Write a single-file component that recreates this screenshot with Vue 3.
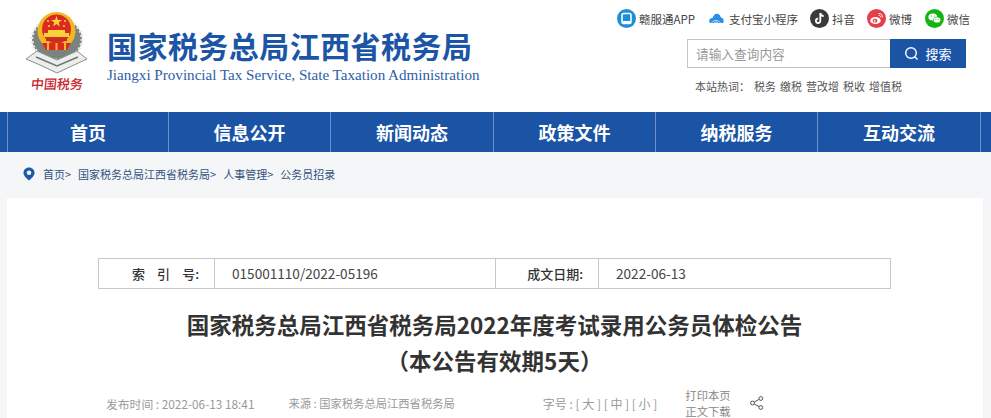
<template>
  <div class="page">
    <header class="top">
      <div class="brand">
        <div class="emblem">
          <svg width="62" height="62" viewBox="0 0 62 62">
            <ellipse cx="31" cy="27" rx="25" ry="21" fill="#7c827e" />
            <ellipse cx="31" cy="27" rx="25" ry="21" fill="none" stroke="#e8eae8" stroke-width="3" stroke-dasharray="2 2.500" />
            <path d="M0 47 L11 39 L31 48 L51 39 L61 47 L48 53 L31 61 L14 53 Z" fill="#eceeec" stroke="#8a908c" stroke-width="1" />
            <path d="M10 45 L31 54 L52 45" fill="none" stroke="#6f7672" stroke-width="1.500" />
            <circle cx="30.500" cy="19" r="19" fill="#f2b824" />
            <circle cx="30.500" cy="17" r="14.500" fill="#dc2a20" />
            <path d="M30.500 4 L31.900 8 L36 8 L32.700 10.500 L33.900 14.500 L30.500 12 L27.100 14.500 L28.300 10.500 L25 8 L29.100 8 Z" fill="#f7d33a" />
            <circle cx="22" cy="9" r="1.100" fill="#f7d33a" /><circle cx="39" cy="9" r="1.100" fill="#f7d33a" />
            <circle cx="23" cy="14" r="1.100" fill="#f7d33a" /><circle cx="38" cy="14" r="1.100" fill="#f7d33a" />
            <path d="M22 18 L39 18 L39 21 L43 21 L43 25 L18 25 L18 21 L22 21 Z" fill="#f7d33a" />
            <path d="M20 27 H41 V29 H20 Z" fill="#b8322a" />
            <path d="M16 31 H45 L41 38 H20 Z" fill="#dc2a20" />
            <path d="M22 31 V38 M30.500 31 V38 M39 31 V38" stroke="#f2b824" stroke-width="2" />
          </svg>
          <span class="emblem-name">中国税务</span>
        </div>
        <div class="brand-text">
          <div class="brand-cn">国家税务总局江西省税务局</div>
          <div class="brand-en">Jiangxi Provincial Tax Service, State Taxation Administration</div>
        </div>
      </div>
      <div class="tools">
        <div class="socials">
          <a class="social">
            <svg width="19" height="19" viewBox="0 0 19 19">
              <circle cx="9.500" cy="9.500" r="9.500" fill="#1c8fd8" />
              <rect x="5" y="4.500" width="9" height="10" rx="1.500" fill="none" stroke="#fff" stroke-width="1.600" />
              <rect x="6" y="12" width="7" height="2.400" fill="#fff" />
            </svg>
            赣服通APP
          </a>
          <a class="social alipay">
            <svg width="15" height="11" viewBox="0 0 17 12">
              <path d="M1 11 C-1 8 1 5.500 4 5.500 C5 2 7 0.500 9 0.500 C11.500 0.500 13 2.500 13.500 5 C16 5.500 17.500 8 16 11 Z" fill="#2a8de8" />
              <path d="M3 11 C4.500 7.500 10.500 7 13 11 M5.500 11 C7 9.500 9 9.500 10.500 11" fill="none" stroke="#cfe6fb" stroke-width="1" />
            </svg>
            支付宝小程序
          </a>
          <a class="social">
            <svg width="19" height="19" viewBox="0 0 19 19">
              <circle cx="9.500" cy="9.500" r="9.500" fill="#3a3a3c" />
              <path d="M10.300 4 V11.800 A2.200 2.200 0 1 1 8.100 9.600 M10.300 4 C10.600 5.800 11.800 6.900 13.700 7.100" fill="none" stroke="#fff" stroke-width="1.800" />
            </svg>
            抖音
          </a>
          <a class="social">
            <svg width="19" height="19" viewBox="0 0 19 19">
              <circle cx="9.500" cy="9.500" r="9.500" fill="#e5404a" />
              <ellipse cx="8.500" cy="11.500" rx="5.200" ry="3.600" fill="#fff" />
              <ellipse cx="8" cy="11.700" rx="2.400" ry="1.900" fill="#e5404a" />
              <circle cx="7.600" cy="11.800" r="0.900" fill="#fff" />
              <path d="M11.500 4.500 C14 4.200 15.800 6 15.200 8.600 M11.800 6.500 C13 6.300 13.700 7.100 13.400 8.200" fill="none" stroke="#fff" stroke-width="1" />
            </svg>
            微博
          </a>
          <a class="social wechat">
            <svg width="19" height="19" viewBox="0 0 19 19">
              <circle cx="9.500" cy="9.500" r="9.500" fill="#14b414" />
              <ellipse cx="7.800" cy="8" rx="4.400" ry="3.600" fill="#fff" />
              <ellipse cx="12" cy="11" rx="3.700" ry="3" fill="#fff" stroke="#14b414" stroke-width="0.600" />
              <circle cx="6.300" cy="7" r="0.600" fill="#14b414" /><circle cx="9.200" cy="7" r="0.600" fill="#14b414" />
              <circle cx="10.800" cy="10.500" r="0.500" fill="#14b414" /><circle cx="13.200" cy="10.500" r="0.500" fill="#14b414" />
            </svg>
            微信
          </a>
        </div>
        <div class="search">
          <div class="search-input">请输入查询内容</div>
          <button class="search-btn">
            <svg width="15" height="15" viewBox="0 0 15 15">
              <circle cx="7" cy="7" r="5.300" fill="none" stroke="#fff" stroke-width="1.400" />
              <path d="M10.800 10.800 L13.500 13.500" stroke="#fff" stroke-width="1.400" />
            </svg>
            搜索
          </button>
        </div>
        <div class="hot">
          <span>本站热词：</span>
          <span v-for="w in hotWords" :key="w">{{ w }}</span>
        </div>
      </div>
    </header>

    <nav class="nav">
      <a v-for="item in navItems" :key="item" class="nav-item">{{ item }}</a>
    </nav>

    <div class="crumbs">
      <svg width="12" height="14" viewBox="0 0 12 14">
        <path d="M6 0.500 C2.800 0.500 0.500 2.800 0.500 5.800 C0.500 9 3.500 11.500 6 13.500 C8.500 11.500 11.500 9 11.500 5.800 C11.500 2.800 9.200 0.500 6 0.500 Z" fill="#1a5ba8" />
        <circle cx="6" cy="5.800" r="2.300" fill="#f5f6f7" />
      </svg>
      <span class="crumb-links">
        <a>首页&gt;</a>
        <a>国家税务总局江西省税务局&gt;</a>
        <a>人事管理&gt;</a>
        <a>公务员招录</a>
      </span>
    </div>

    <main class="card">
      <div class="info-table">
        <div class="cell label"><span class="wide">索引</span>号:</div>
        <div class="cell value">015001110/2022-05196</div>
        <div class="cell label">成文日期:</div>
        <div class="cell value last">2022-06-13</div>
      </div>
      <h1 class="title">国家税务总局江西省税务局2022年度考试录用公务员体检公告<br />（本公告有效期5天）</h1>
      <div class="meta">
        <span class="m-date">发布时间 : 2022-06-13 18:41</span>
        <span class="m-source">来源 : 国家税务总局江西省税务局</span>
        <span class="m-size">字号 : [ 大 ] [ 中 ] [ 小 ]</span>
        <span class="m-links"><a>打印本页</a><a>正文下载</a></span>
        <svg class="m-share" width="14" height="14" viewBox="0 0 14 14">
          <circle cx="10.800" cy="2.500" r="1.900" fill="none" stroke="#555" />
          <circle cx="2.500" cy="7" r="1.900" fill="none" stroke="#555" />
          <circle cx="10.800" cy="11.500" r="1.900" fill="none" stroke="#555" />
          <path d="M4.200 6 L9.100 3.400 M4.200 8 L9.100 10.600" stroke="#555" />
        </svg>
      </div>
    </main>
  </div>
</template>

<script setup>
const navItems = ['首页', '信息公开', '新闻动态', '政策文件', '纳税服务', '互动交流']
const hotWords = ['税务', '缴税', '营改增', '税收', '增值税']
</script>

<style>
html, body {
  margin: 0;
  height: 418px;
  overflow: hidden;
  background: #fff;
}
</style>

<style scoped>
.page {
  width: 991px;
  height: 418px;
  overflow: hidden;
  font-family: "Noto Sans CJK SC", "Noto Sans", sans-serif;
  color: #333;
  font-size: 12px;
}
.top {
  display: flex;
  justify-content: space-between;
  height: 112px;
  box-sizing: border-box;
  padding: 0 21px 0 26px;
}
.brand {
  display: flex;
  align-items: flex-start;
}
.emblem {
  width: 62px;
  padding-top: 12px;
  display: flex;
  flex-direction: column;
  align-items: center;
}
.emblem-name {
  margin-top: 1px;
  font-size: 13px;
  line-height: 18px;
  font-weight: 500;
  color: #c8232c;
  white-space: nowrap;
  transform: skewX(-6deg);
}
.brand-text {
  margin-left: 19px;
  padding-top: 27px;
}
.brand-cn {
  font-size: 30px;
  line-height: 36px;
  font-weight: 700;
  letter-spacing: 0.45px;
  color: #1c55a6;
  white-space: nowrap;
}
.brand-en {
  font-family: "Liberation Serif", serif;
  font-size: 15.1px;
  line-height: 20px;
  color: #2b5ea8;
  white-space: nowrap;
  margin-top: 2px;
}
.tools {
  display: flex;
  flex-direction: column;
  align-items: flex-end;
}
.socials {
  display: flex;
  align-items: center;
  height: 19px;
  margin-top: 9px;
  gap: 12px;
}
.social {
  display: flex;
  align-items: center;
  gap: 3px;
  font-size: 11.5px;
  color: #444;
  white-space: nowrap;
}
.alipay {
  gap: 5px;
  margin-left: 2px;
}
.wechat {
  margin-left: 1px;
}
.search {
  display: flex;
  width: 279px;
  height: 29px;
  margin: 11px 4px 0 0;
}
.search-input {
  flex: 1;
  border: 1px solid #c4c4c4;
  border-right: 0;
  padding-left: 8px;
  line-height: 27px;
  font-size: 12.7px;
  color: #999;
}
.search-btn {
  width: 76px;
  border: 0;
  padding: 0;
  background: #1b54a5;
  color: #fff;
  font: inherit;
  font-size: 13px;
  display: flex;
  align-items: center;
  justify-content: center;
  gap: 6px;
}
.hot {
  display: flex;
  width: 271px;
  margin: 10px 4px 0 0;
  gap: 4px;
  line-height: 16px;
  font-size: 11px;
  color: #555;
}
.nav {
  display: grid;
  grid-template-columns: 161px 162px 163px 162px 162px 164px;
  height: 40px;
  padding: 0 7px;
  background: #1b54a5;
}
.nav-item {
  border-left: 1px solid #6f93c8;
  text-align: center;
  line-height: 40px;
  font-size: 18px;
  font-weight: 700;
  color: #fff;
}
.nav-item:last-child {
  border-right: 1px solid #6f93c8;
}
.crumbs {
  display: flex;
  align-items: center;
  height: 46px;
  padding: 0 0 2px 23px;
  box-sizing: border-box;
  gap: 8px;
  background: #f5f6f7;
  font-size: 11px;
  color: #33527f;
}
.crumb-links {
  display: flex;
  gap: 7px;
}
.card {
  margin: 0 8px 0 7px;
  height: 220px;
  background: #fff;
  box-shadow: 8px 0 0 #f5f6f7, -7px 0 0 #f5f6f7;
  padding-top: 60px;
  box-sizing: border-box;
}
.info-table {
  display: grid;
  grid-template-columns: 116px 281px 103px 291px;
  width: 793px;
  height: 31px;
  box-sizing: border-box;
  margin-left: 91px;
  border: 1px solid #c8c8c8;
}
.cell {
  line-height: 29px;
  font-size: 13.6px;
  white-space: nowrap;
  color: #444;
}
.label {
  font-size: 13px;
  font-weight: 500;
  color: #333;
  text-align: right;
  padding-right: 15px;
  border-right: 1px solid #c8c8c8;
}
.wide {
  letter-spacing: 12px;
}
.value {
  padding-left: 17px;
  border-right: 1px solid #c8c8c8;
}
.value.last {
  border-right: 0;
}
.title {
  margin: 17px 0 0;
  padding-right: 1px;
  font-size: 22.5px;
  line-height: 36px;
  font-weight: 700;
  color: #333;
  text-align: center;
}
.meta {
  display: flex;
  align-items: center;
  margin-top: 9px;
  padding-left: 99px;
  color: #999;
  white-space: nowrap;
}
.m-date {
  font-size: 11.8px;
}
.m-source {
  margin-left: 34px;
  font-size: 11.3px;
}
.m-size {
  margin-left: 88px;
  font-size: 12px;
}
.m-links {
  display: flex;
  flex-direction: column;
  margin-left: 28px;
  line-height: 16px;
  font-size: 11.3px;
  color: #888;
}
.m-share {
  margin-left: 19px;
}
</style>
